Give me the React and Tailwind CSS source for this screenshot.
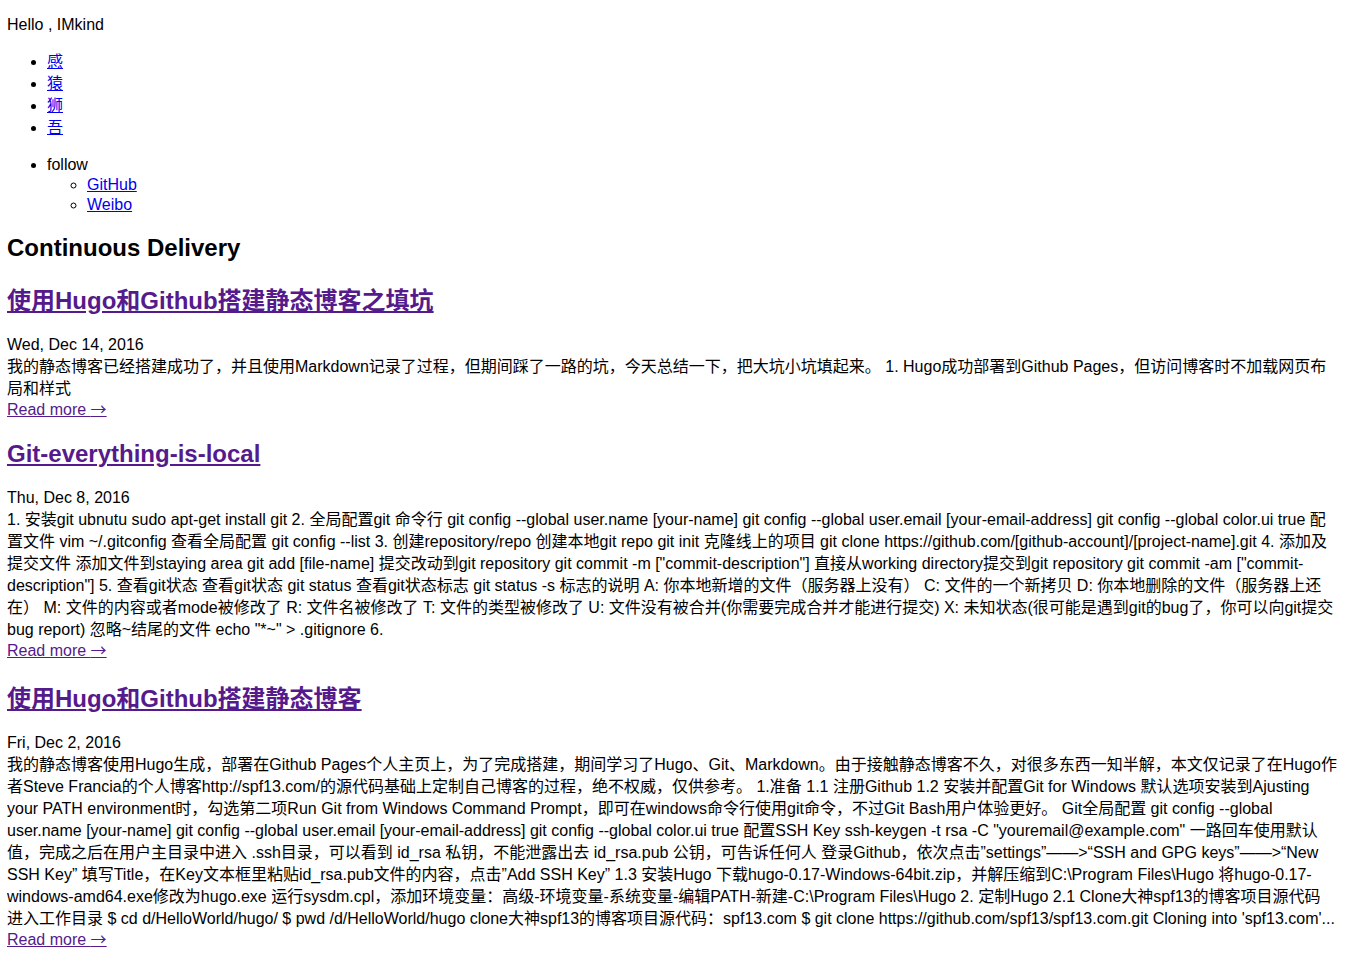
const posts = [
  {
    title: '使用Hugo和Github搭建静态博客之填坑',
    titleClass: 'mt-[25px]',
    date: 'Wed, Dec 14, 2016',
    summary:
      '我的静态博客已经搭建成功了，并且使用Markdown记录了过程，但期间踩了一路的坑，今天总结一下，把大坑小坑填起来。 1. Hugo成功部署到Github Pages，但访问博客时不加载网页布局和样式',
  },
  {
    title: 'Git-everything-is-local',
    titleClass: 'mt-5',
    date: 'Thu, Dec 8, 2016',
    summary:
      '1. 安装git ubnutu sudo apt-get install git 2. 全局配置git 命令行 git config --global user.name [your-name] git config --global user.email [your-email-address] git config --global color.ui true 配置文件 vim ~/.gitconfig 查看全局配置 git config --list 3. 创建repository/repo 创建本地git repo git init 克隆线上的项目 git clone https://github.com/[github-account]/[project-name].git 4. 添加及提交文件 添加文件到staying area git add [file-name] 提交改动到git repository git commit -m ["commit-description"] 直接从working directory提交到git repository git commit -am ["commit-description"] 5. 查看git状态 查看git状态 git status 查看git状态标志 git status -s 标志的说明 A: 你本地新增的文件（服务器上没有） C: 文件的一个新拷贝 D: 你本地删除的文件（服务器上还在） M: 文件的内容或者mode被修改了 R: 文件名被修改了 T: 文件的类型被修改了 U: 文件没有被合并(你需要完成合并才能进行提交) X: 未知状态(很可能是遇到git的bug了，你可以向git提交bug report) 忽略~结尾的文件 echo "*~" > .gitignore 6.',
  },
  {
    title: '使用Hugo和Github搭建静态博客',
    titleClass: 'mt-[24px]',
    date: 'Fri, Dec 2, 2016',
    summary:
      '我的静态博客使用Hugo生成，部署在Github Pages个人主页上，为了完成搭建，期间学习了Hugo、Git、Markdown。由于接触静态博客不久，对很多东西一知半解，本文仅记录了在Hugo作者Steve Francia的个人博客http://spf13.com/的源代码基础上定制自己博客的过程，绝不权威，仅供参考。 1.准备 1.1 注册Github 1.2 安装并配置Git for Windows 默认选项安装到Ajusting your PATH environment时，勾选第二项Run Git from Windows Command Prompt，即可在windows命令行使用git命令，不过Git Bash用户体验更好。 Git全局配置 git config --global user.name [your-name] git config --global user.email [your-email-address] git config --global color.ui true 配置SSH Key ssh-keygen -t rsa -C "youremail@example.com" 一路回车使用默认值，完成之后在用户主目录中进入 .ssh目录，可以看到 id_rsa 私钥，不能泄露出去 id_rsa.pub 公钥，可告诉任何人 登录Github，依次点击”settings”——>“SSH and GPG keys”——>“New SSH Key” 填写Title，在Key文本框里粘贴id_rsa.pub文件的内容，点击”Add SSH Key” 1.3 安装Hugo 下载hugo-0.17-Windows-64bit.zip，并解压缩到C:\\Program Files\\Hugo 将hugo-0.17-windows-amd64.exe修改为hugo.exe 运行sysdm.cpl，添加环境变量：高级-环境变量-系统变量-编辑PATH-新建-C:\\Program Files\\Hugo 2. 定制Hugo 2.1 Clone大神spf13的博客项目源代码 进入工作目录 $ cd d/HelloWorld/hugo/ $ pwd /d/HelloWorld/hugo clone大神spf13的博客项目源代码：spf13.com $ git clone https://github.com/spf13/spf13.com.git Cloning into \'spf13.com\'...',
  },
]

const navLinks = ['感', '猿', '狮', '吾']

function App() {
  return (
    <div className="min-h-screen bg-white pl-[7px] pr-2 pb-2 text-black text-base font-['Liberation_Sans','Noto_Sans_CJK_SC',sans-serif]">

      {/* Greeting */}
      <p className="pt-[15px] leading-[20px]">Hello , IMkind</p>

      {/* Nav */}
      <ul className="mt-4 list-disc pl-10 leading-[22px]">
        {navLinks.map((item) => (
          <li key={item}>
            <a href="#" className="text-[#0000ee] underline">
              {item}
            </a>
          </li>
        ))}
      </ul>

      <ul className="mt-4 list-disc pl-10 leading-[20px]">
        <li>
          follow
          <ul className="list-[circle] pl-10">
            <li>
              <a href="#" className="text-[#0000ee] underline">GitHub</a>
            </li>
            <li>
              <a href="#" className="text-[#0000ee] underline">Weibo</a>
            </li>
          </ul>
        </li>
      </ul>

      <h2 className="mt-[19px] text-2xl font-bold leading-[28px]">
        Continuous Delivery
      </h2>

      {/* Posts */}
      {posts.map((post) => (
        <div key={post.title}>
          <h2 className={`${post.titleClass} text-2xl font-bold leading-[28px]`}>
            <a href="#" className="text-[#551a8b] underline">
              {post.title}
            </a>
          </h2>
          <div className="mt-[19px] leading-[22px]">{post.date}</div>
          <div className="leading-[22px]">{post.summary}</div>
          <div className="h-5 overflow-visible leading-[20px]">
            <a href="#" className="text-[#551a8b] underline">
              Read more <span className="font-['Noto_Sans_CJK_SC',sans-serif] leading-none">→</span>
            </a>
          </div>
        </div>
      ))}
    </div>
  )
}

export default App
